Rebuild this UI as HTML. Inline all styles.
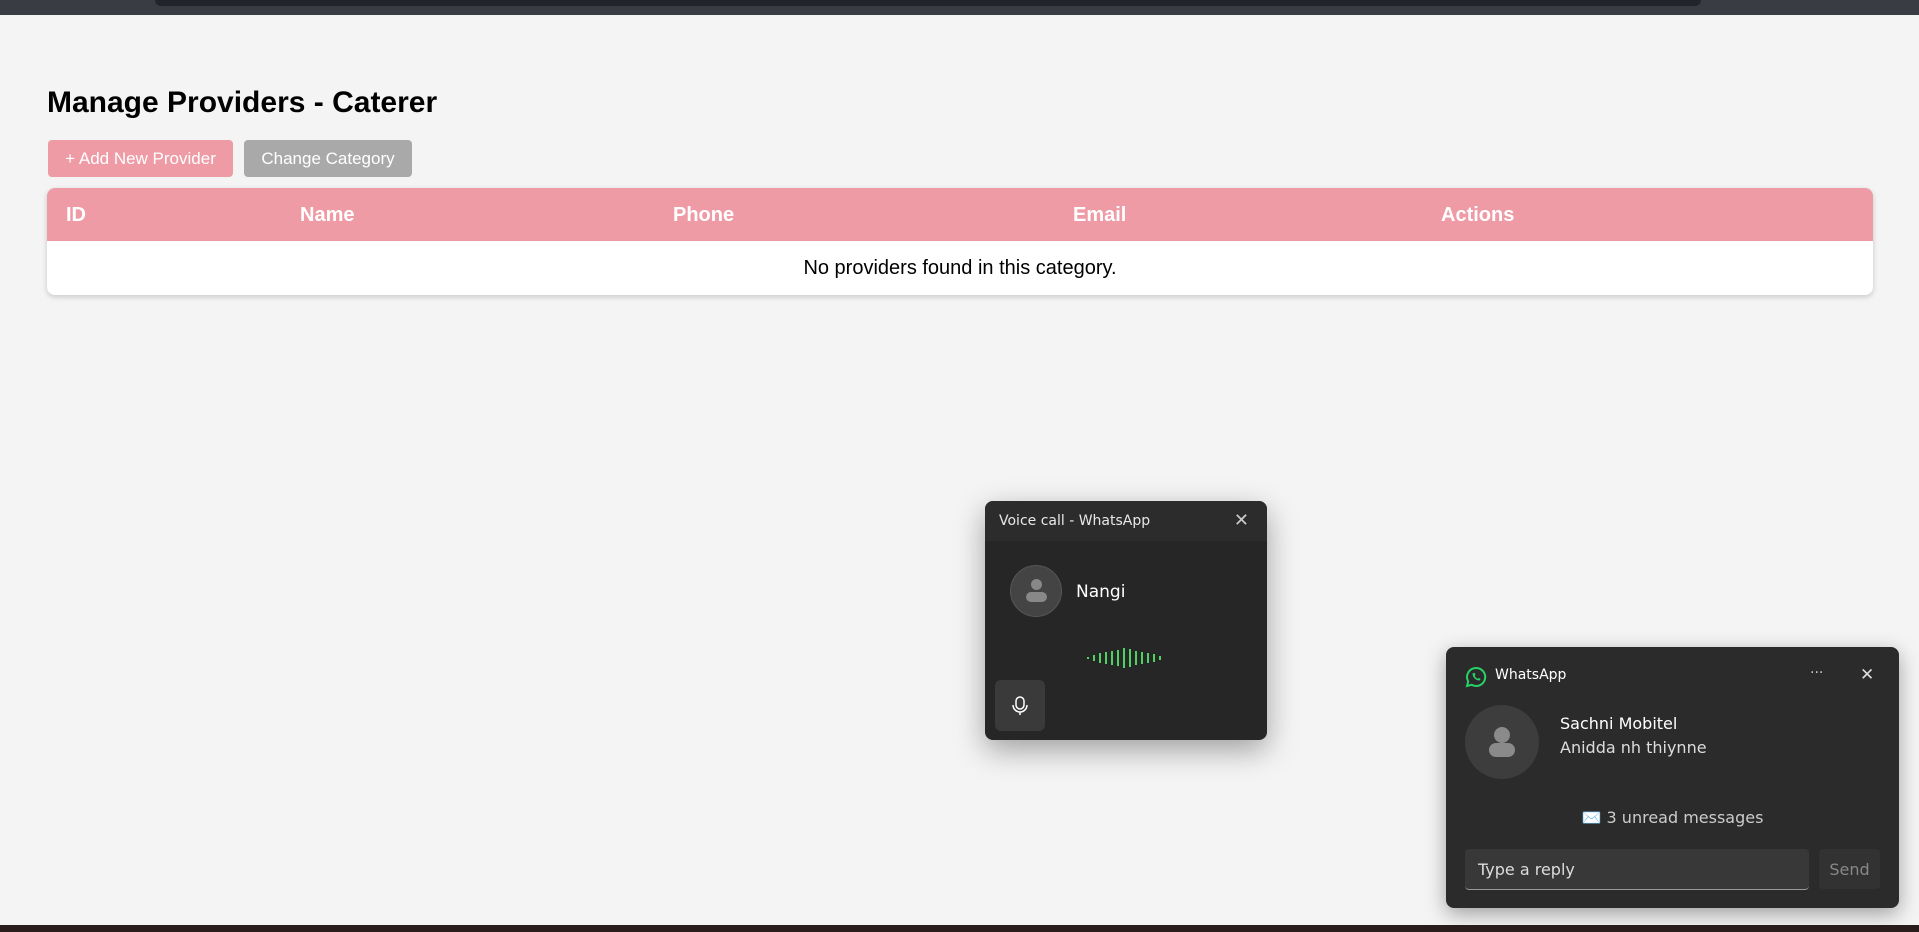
<!DOCTYPE html>
<html><head><meta charset="utf-8"><style>
*{box-sizing:border-box;margin:0;padding:0}
body{width:1919px;height:932px;background:#f4f4f4;font-family:"Liberation Sans",Arial,sans-serif;position:relative;overflow:hidden}
.top{position:absolute;left:0;top:0;width:1919px;height:15px;background:#3a3c44}
.top2{position:absolute;left:155px;top:0;width:1546px;height:6px;background:#22242b;border-radius:0 0 12px 12px}
h1{position:absolute;left:47px;top:86px;font-size:30px;font-weight:bold;color:#000}
.btn{position:absolute;top:140px;height:37px;border-radius:4px;color:#fff;font-size:17px;line-height:37px;text-align:center}
.tbl{position:absolute;left:47px;top:188px;width:1826px;height:107px;background:#fff;border-radius:8px;box-shadow:0 2px 6px rgba(0,0,0,.18);overflow:hidden}
.th{height:53px;background:#ee9ba6;position:relative}
.th span{position:absolute;top:16px;color:#fff;font-weight:bold;font-size:20px}
.empty{text-align:center;font-size:20px;line-height:54px;color:#000}
.vc{position:absolute;left:985px;top:501px;width:282px;height:239px;background:#262626;border-radius:8px;box-shadow:0 10px 30px rgba(0,0,0,.35);overflow:hidden;font-family:"DejaVu Sans",sans-serif}
.vc .t{height:40px;background:#2c2c2c;color:#e8e8e8;font-size:14px;padding:12px 14px}
.wa{position:absolute;left:1446px;top:647px;width:453px;height:261px;background:#2b2b2b;border-radius:8px;box-shadow:0 6px 20px rgba(0,0,0,.35);font-family:"DejaVu Sans",sans-serif;color:#fff}
.bar{position:absolute;left:0;top:925px;width:1919px;height:7px;background:#2a1c1a}
</style></head><body>
<div class="top"></div><div class="top2"></div>
<h1>Manage Providers - Caterer</h1>
<div class="btn" style="left:48px;width:185px;background:#ee9ba6">+ Add New Provider</div>
<div class="btn" style="left:244px;width:168px;background:#a9a9a9">Change Category</div>
<div class="tbl"><div class="th">
<span style="left:19px">ID</span><span style="left:253px">Name</span><span style="left:626px">Phone</span><span style="left:1026px">Email</span><span style="left:1394px">Actions</span>
</div><div class="empty">No providers found in this category.</div></div>

<div class="vc"><div class="t">Voice call - WhatsApp<span style="position:absolute;right:18px;top:9px;font-size:18px;color:#ccc">✕</span></div>
<div style="position:absolute;left:25px;top:64px;width:52px;height:52px;border-radius:50%;background:#444;border:1px solid #555">
<div style="position:absolute;left:20px;top:13px;width:11px;height:11px;border-radius:50%;background:#888"></div>
<div style="position:absolute;left:15px;top:26px;width:21px;height:10px;border-radius:5px;background:#888"></div></div>
<div style="position:absolute;left:91px;top:81px;font-size:17px;color:#fff">Nangi</div>
<svg style="position:absolute;left:97px;top:146px" width="85" height="22">
<g stroke="#4fd164" stroke-width="2">
<line x1="6" y1="10" x2="6" y2="12"/><line x1="12" y1="8" x2="12" y2="14"/><line x1="18" y1="6" x2="18" y2="16"/><line x1="24" y1="5" x2="24" y2="17"/><line x1="30" y1="4" x2="30" y2="18"/><line x1="36" y1="3" x2="36" y2="19"/><line x1="42" y1="1" x2="42" y2="21"/><line x1="48" y1="2" x2="48" y2="20"/><line x1="54" y1="4" x2="54" y2="18"/><line x1="60" y1="5" x2="60" y2="17"/><line x1="66" y1="6" x2="66" y2="16"/><line x1="72" y1="7" x2="72" y2="15"/><line x1="78" y1="9" x2="78" y2="13"/></g></svg>
<div style="position:absolute;left:10px;top:179px;width:50px;height:51px;border-radius:6px;background:#3a3a3a">
<svg width="50" height="51"><rect x="21" y="17" width="8" height="12" rx="4" fill="none" stroke="#fff" stroke-width="1.5"/><path d="M18 25a7 7 0 0 0 14 0M25 32v3" fill="none" stroke="#fff" stroke-width="1.5"/></svg></div>
</div>

<div class="wa">
<svg style="position:absolute;left:19px;top:19px" width="22" height="22" viewBox="0 0 22 22"><path d="M11 2a9 9 0 0 0-7.8 13.4L2 20l4.7-1.2A9 9 0 1 0 11 2z" fill="none" stroke="#25d366" stroke-width="2"/><path d="M7.5 7.5c0 3.5 3 7 7 7l1.2-1.5-2-1-1 .8c-1.3-.5-2.5-1.7-3-3l.8-1-1-2z" fill="#25d366"/></svg>
<div style="position:absolute;left:49px;top:20px;font-size:14px">WhatsApp</div>
<div style="position:absolute;left:364px;top:18px;font-size:14px;color:#ccc">···</div>
<div style="position:absolute;left:414px;top:18px;font-size:17px;color:#ddd">✕</div>
<div style="position:absolute;left:19px;top:58px;width:74px;height:74px;border-radius:50%;background:#3d3d3d">
<div style="position:absolute;left:29px;top:22px;width:16px;height:16px;border-radius:50%;background:#8a8a8a"></div>
<div style="position:absolute;left:24px;top:38px;width:26px;height:14px;border-radius:7px;background:#8a8a8a"></div></div>
<div style="position:absolute;left:114px;top:67px;font-size:16px">Sachni Mobitel</div>
<div style="position:absolute;left:114px;top:91px;font-size:16px;color:#ddd">Anidda nh thiynne</div>
<div style="position:absolute;left:0;width:453px;top:161px;text-align:center;font-size:16px;color:#ccc">✉️ 3 unread messages</div>
<div style="position:absolute;left:19px;top:202px;width:344px;height:41px;background:#383838;border-radius:4px;border-bottom:1px solid #999;font-size:16px;color:#ddd;padding:11px 13px">Type a reply</div>
<div style="position:absolute;left:373px;top:202px;width:61px;height:40px;background:#323232;border-radius:4px;font-size:16px;color:#888;text-align:center;line-height:42px">Send</div>
</div>
<div class="bar"></div>
</body></html>
